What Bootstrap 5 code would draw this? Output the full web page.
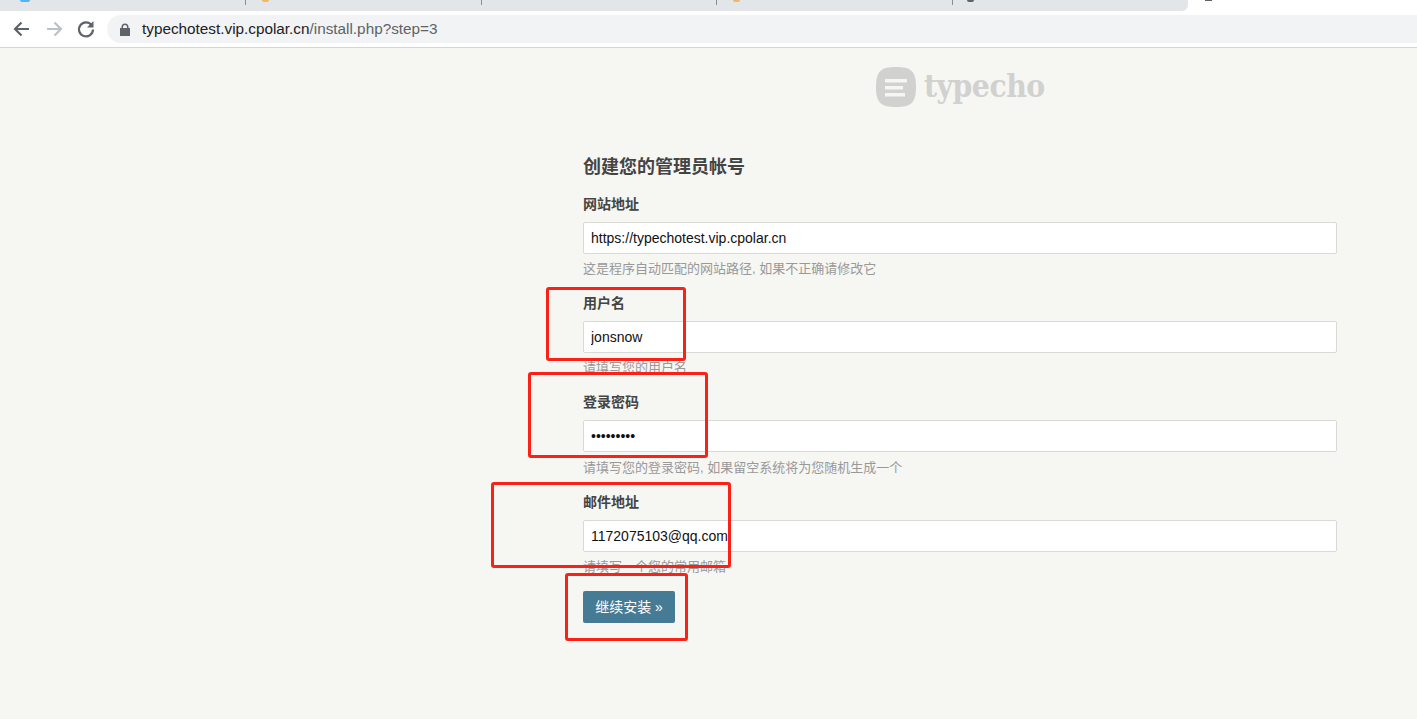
<!DOCTYPE html>
<html lang="zh-CN">
<head>
<meta charset="utf-8">
<title>typecho install</title>
<link href="https://cdn.jsdelivr.net/npm/bootstrap@5.3.0/dist/css/bootstrap.min.css" rel="stylesheet">
<style>
html,body{height:719px;overflow:hidden}
body{background:#f6f6f3;font-family:"Liberation Sans","Noto Sans CJK SC",sans-serif;color:#444;position:relative}
.tabstrip{height:11px;background:#fff;overflow:hidden}
.tabrail{width:1188px;height:11px;background:#e3e6e9;border-bottom-right-radius:6px;padding-left:9px}
.tabcell{width:236px;height:11px;position:relative}
.tabcell+.tabcell::before{content:"";position:absolute;left:0;top:0;width:1px;height:5px;background:#8a8d91}
.favbit{position:absolute;top:0;height:2px;border-radius:0 0 4px 4px}
.fb-blue{left:11px;width:10px;background:#4fb6f2}
.fb-orange{left:17px;width:7px;background:#f5b566}
.fb-dark{left:15px;width:7px;background:#5f6368}
.activebit{position:absolute;left:1205px;top:0;width:7px;height:1px;background:#5f6368}
.toolbar{height:36px;background:#fff;padding-left:12px;gap:12px}
.navglyph{width:20px;height:20px;flex:none}
.omnibox{margin-left:-1px;flex:1;height:28px;background:#f1f3f4;border-radius:14px 0 0 14px;font-size:15.3px;padding-left:13px;gap:12px;color:#202124}
.omnipath{color:#5f6368}
.chromeedge{height:1px;background:#d6d6d4}
.logobar{height:66px;padding-left:876px;padding-top:19px;gap:8px}
.logotext{font-family:"DejaVu Serif Condensed","DejaVu Serif",serif;font-weight:700;font-size:31.5px;line-height:38px;color:#d1d1cf;letter-spacing:-.5px}
.setupform{margin-left:583px;width:754px;padding-top:40px}
.setuptitle{font-size:18px;font-weight:700;line-height:26px;color:#444;margin:0 0 14px}
.fieldblock{height:99px}
.fieldblock:nth-of-type(3){height:100px}
.fieldblock:nth-of-type(3) .fieldhelp{margin-top:7px}
.fieldlabel{display:block;font-size:14px;font-weight:700;line-height:20px;color:#444;margin:0 0 8px}
.setupinput{height:32px;padding:0 7px;font-size:14px;color:#111;background:#fff;border:1px solid #d9d9d6;border-radius:2px;box-shadow:none}
.fieldhelp{font-size:13px;line-height:18px;margin-top:6px;color:#999}
.setupbtn{width:92px;height:32px;padding:0;font-size:14px;font-weight:400;color:#fff;background:#467b96;border:0;border-radius:2px}
.redmark{position:absolute;border:3px solid #fb2117;border-radius:3px;pointer-events:none}
.rm1{left:546px;top:287px;width:140px;height:74px}
.rm2{left:528px;top:372px;width:180px;height:86px}
.rm3{left:491px;top:482px;width:240px;height:86px}
.rm4{left:565px;top:573px;width:123px;height:68px}
</style>
</head>
<body>
<div class="tabstrip">
  <div class="tabrail d-flex">
    <div class="tabcell"><span class="favbit fb-blue"></span></div>
    <div class="tabcell"><span class="favbit fb-orange"></span></div>
    <div class="tabcell"></div>
    <div class="tabcell"><span class="favbit fb-orange"></span></div>
    <div class="tabcell"><span class="favbit fb-dark"></span></div>
  </div>
</div>
<span class="activebit"></span>
<div class="toolbar d-flex align-items-center">
  <svg class="navglyph" viewBox="0 0 20 20" fill="none" stroke="#5f6368" stroke-width="2.200"><path d="M17 10H3.500M9.500 3.500L3 10l6.500 6.500"/></svg>
  <svg class="navglyph" viewBox="0 0 20 20" fill="none" stroke="#bdc1c6" stroke-width="2.200"><path d="M3 10h13.500M10.500 3.500L17 10l-6.500 6.500"/></svg>
  <svg class="navglyph" viewBox="0 0 20 20" fill="none" stroke="#5f6368" stroke-width="2.200"><path d="M15.500 6A7 7 0 1 0 17 10.500"/><path d="M17.500 2V8.500H11z" fill="#5f6368" stroke="none"/></svg>
  <div class="omnibox d-flex align-items-center">
    <svg width="10" height="13" viewBox="0 0 10 13" fill="#5f6368"><path d="M1.500 5V4a3.500 3.500 0 0 1 7 0v1H10v8H0V5zM3 5h4V4a2 2 0 0 0-4 0z"/></svg>
    <span>typechotest.vip.cpolar.cn<span class="omnipath">/install.php?step=3</span></span>
  </div>
</div>
<div class="chromeedge"></div>
<div class="logobar d-flex align-items-start">
  <svg width="40" height="40" viewBox="0 0 40 40"><path d="M20 0C34 0 40 3 40 20S34 40 20 40 0 37 0 20 6 0 20 0z" fill="#d1d1cf"/><path d="M9 12h22v3.500H9zM9 19h18v3.500H9zM9 26h20v3.500H9z" fill="#f6f6f3"/></svg>
  <span class="logotext">typecho</span>
</div>
<form class="setupform" onsubmit="return false">
  <h3 class="setuptitle">创建您的管理员帐号</h3>
  <div class="fieldblock">
    <label class="fieldlabel" for="siteurl">网站地址</label>
    <input id="siteurl" class="form-control setupinput" type="text" value="https://typechotest.vip.cpolar.cn">
    <div class="fieldhelp">这是程序自动匹配的网站路径, 如果不正确请修改它</div>
  </div>
  <div class="fieldblock">
    <label class="fieldlabel" for="uname">用户名</label>
    <input id="uname" class="form-control setupinput" type="text" value="jonsnow">
    <div class="fieldhelp">请填写您的用户名</div>
  </div>
  <div class="fieldblock">
    <label class="fieldlabel" for="pw">登录密码</label>
    <input id="pw" class="form-control setupinput" type="password" value="jonsnow12">
    <div class="fieldhelp">请填写您的登录密码, 如果留空系统将为您随机生成一个</div>
  </div>
  <div class="fieldblock">
    <label class="fieldlabel" for="mail">邮件地址</label>
    <input id="mail" class="form-control setupinput" type="text" value="1172075103@qq.com">
    <div class="fieldhelp">请填写一个您的常用邮箱</div>
  </div>
  <button class="btn setupbtn" type="submit">继续安装 »</button>
</form>
<div class="redmark rm1"></div>
<div class="redmark rm2"></div>
<div class="redmark rm3"></div>
<div class="redmark rm4"></div>
<script src="https://cdn.jsdelivr.net/npm/bootstrap@5.3.0/dist/js/bootstrap.bundle.min.js"></script>
</body>
</html>
